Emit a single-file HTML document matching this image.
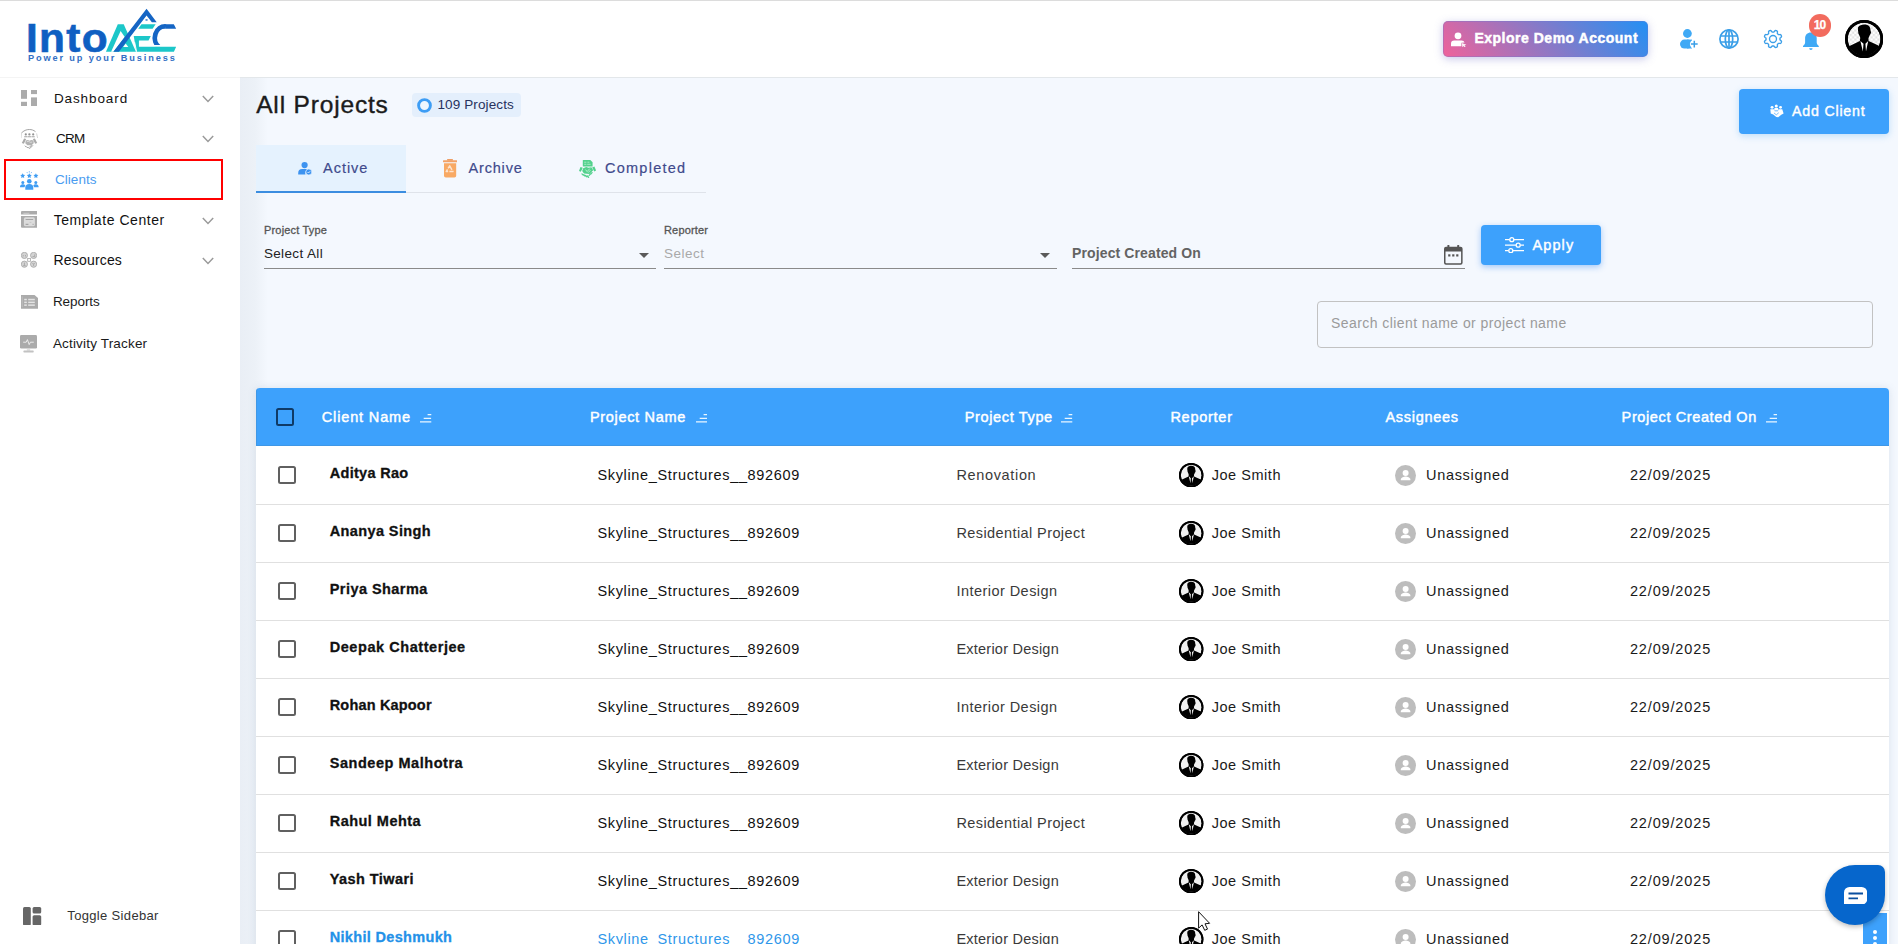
<!DOCTYPE html>
<html lang="en">
<head>
<meta charset="utf-8">
<title>All Projects</title>
<style>
*{box-sizing:border-box;margin:0;padding:0}
html,body{width:1898px;height:944px;overflow:hidden;background:#fff;font-family:"Liberation Sans",sans-serif;color:#111}
.abs{position:absolute}
.tx{position:absolute;white-space:pre;font-family:"Liberation Sans",sans-serif}
#topline{position:absolute;left:0;top:0;width:1898px;height:1px;background:#dcdcdc}
#header{position:absolute;left:0;top:0;width:1898px;height:78px;background:#fff;border-bottom:1px solid #f4f4f4}
#hline{position:absolute;left:240px;top:77px;width:1658px;height:1px;background:#e3e7ea}
#sidebar{position:absolute;left:0;top:78px;width:240px;height:866px;background:#fff}
#main{position:absolute;left:240px;top:78px;width:1658px;height:866px;background:#f4f8fe;overflow:hidden}
#main:before{content:"";position:absolute;left:0;top:0;width:28px;height:100%;background:linear-gradient(90deg,#e9eef5 0,#ecf1f7 15px,#f4f8fe 28px)}
.row{position:absolute;left:256px;width:1633px;height:58px;background:#fff;border-bottom:1px solid #dcdcdc}
.cb{position:absolute;width:17.800px;height:17.800px;border:2px solid #606060;border-radius:2.500px;background:#fff}
</style>
</head>
<body>
<svg class="abs" width="0" height="0" style="left:0;top:0"><defs><pattern id="chk" width="4.600" height="4.600" patternUnits="userSpaceOnUse"><rect width="4.600" height="4.600" fill="#fff"/><rect width="2.300" height="2.300" fill="#e4e4e4"/><rect x="2.300" y="2.300" width="2.300" height="2.300" fill="#e4e4e4"/></pattern><clipPath id="avc"><circle cx="19" cy="19" r="16.500"/></clipPath></defs></svg>
<div id="main"></div>
<span class="tx" style="left:256.2px;top:87.5px;font-size:24.5px;line-height:34px;color:#1b1b1b;letter-spacing:0.83px;-webkit-text-stroke:.4px #1b1b1b;">All Projects</span>
<div class="abs" style="left:412px;top:93px;width:109px;height:24px;border-radius:4px;background:#e4effc"></div>
<svg class="abs" style="left:417px;top:97.5px;" width="15" height="15" viewBox="0 0 15 15"><circle cx="7.500" cy="7.500" r="5.900" fill="#eef6fe" stroke="#3d9df5" stroke-width="2.900"/></svg>
<span class="tx" style="left:437.5px;top:94.7px;font-size:13.5px;line-height:20px;color:#27325e;letter-spacing:0.11px;">109 Projects</span>
<div class="abs" style="left:1739px;top:89px;width:150px;height:45px;border-radius:4px;background:#3da1fc;box-shadow:0 2px 7px rgba(80,170,240,.33)"></div>
<svg class="abs" style="left:1769px;top:104.2px;" width="14.6" height="13.8" viewBox="0 0 15.2 13.8"><g fill="#fff"><circle cx="3.200" cy="3.200" r="1.500"/><circle cx="7.600" cy="1.800" r="1.600"/><circle cx="12" cy="3.200" r="1.500"/><path d="M1.400,5.200 h3.600 l1,2 h3.200 l1,-2 h3.600 l1.400,4.300 -2.400,1.300 -3.200,2.600 -2,-.2 -3.200,-2.600 -2.600,-1.100 Z"/><path d="M5.800,3.800 h3.600 l.6,2.600 h-4.800 Z"/></g><path d="M5.200,9 l2.400,2 2.600,-2.200" stroke="#3d9ff8" stroke-width=".7" fill="none"/></svg>
<span class="tx" style="left:1792.0px;top:101.0px;font-size:14.2px;line-height:20px;color:#fff;letter-spacing:0.80px;-webkit-text-stroke:.4px #fff;">Add Client</span>
<div class="abs" style="left:256px;top:145px;width:150px;height:48px;background:#e5f2fe;border-bottom:2.500px solid #3b8de0"></div>
<div class="abs" style="left:406px;top:191.500px;width:300px;height:1.500px;background:#dfe3ea"></div>
<svg class="abs" style="left:298.1px;top:162.2px;" width="14" height="13.3" viewBox="0 0 14 13.3"><circle cx="6.600" cy="3.100" r="3.100" fill="#3d93f0"/><path d="M0.200,12.600 v-1.500 a4,4 0 0 1 4,-4 h3.600 a4,4 0 0 1 2,.5 a3.800,3.800 0 0 0 -2.300,5 Z" fill="#3d93f0"/><circle cx="10.800" cy="10" r="3" fill="#3d93f0" stroke="#e5f2fe" stroke-width=".7"/><path d="M9.500,10 l1,1 1.700,-1.800" stroke="#e5f2fe" stroke-width=".9" fill="none"/></svg>
<span class="tx" style="left:323.1px;top:157.9px;font-size:14.5px;line-height:20px;color:#3f4a8c;letter-spacing:0.96px;-webkit-text-stroke:.18px #3f4a8c;">Active</span>
<svg class="abs" style="left:443.1px;top:158.9px;" width="14.2" height="19" viewBox="0 0 14.2 19"><g fill="#f5a364"><rect x="4" y="0" width="6" height="1.800" rx=".7" fill="#ee9f66"/><rect x="0" y="1.300" width="14.200" height="1.900" rx=".5" fill="#f2a166"/><path d="M1,4.200 h12.200 v12.600 a1.800,1.800 0 0 1 -1.800,1.800 h-8.600 a1.800,1.800 0 0 1 -1.800,-1.800 Z" fill="#f8a964"/></g><path d="M6.700,6.900 l3.300,5.700 h-6.800 Z" fill="none" stroke="#fde4cf" stroke-width="1.500" stroke-linejoin="round" stroke-dasharray="4.500 1.200"/></svg>
<span class="tx" style="left:468.5px;top:157.9px;font-size:14.5px;line-height:20px;color:#3f4a8c;letter-spacing:0.82px;-webkit-text-stroke:.18px #3f4a8c;">Archive</span>
<svg class="abs" style="left:578.5px;top:160px;" width="17.3" height="18" viewBox="0 0 17.3 18"><g fill="#52d18c"><path d="M4.300,0 h7 l2.300,2.300 v3.700 a.5,.5 0 0 1 -.5,.5 h-8.800 a.5,.5 0 0 1 -.5,-.5 v-5.500 a.5,.5 0 0 1 .5,-.5 Z"/><path d="M1.500,6.900 l2.300,.8 -2,4.100 -1.800,-.9 Z M15.400,6.500 l-2.300,.9 2.200,4.100 1.800,-1 Z"/><path d="M4.200,8.300 l3,-1.200 2.300,.6 2.900,-.5 1.800,3 -3.700,3.700 -5.500,-.3 -1.800,-2.600 Z"/></g><path d="M3,13.900 l1.200,1.200 M4.800,14.800 l1.200,1.200 M6.600,15.500 l1.200,1.200 M8.400,16 l1.200,1.200 M11.800,13.600 l-1.600,1.800 M13,12.600 l-1,1.200" stroke="#52d18c" stroke-width="1.300" stroke-linecap="round"/><path d="M5.200,2.200 h2.200 M8.400,2.200 h2 M5.200,4.300 h2.200 M8.200,4.300 h3.400" stroke="#a5e9c4" stroke-width="1"/><path d="M6.600,9.600 l1.500,2 2.700,-3 M9.200,12.600 l2.200,-2.400" stroke="#c9f2dc" stroke-width=".8" fill="none"/></svg>
<span class="tx" style="left:604.9px;top:157.9px;font-size:14.5px;line-height:20px;color:#3f4a8c;letter-spacing:1.27px;-webkit-text-stroke:.18px #3f4a8c;">Completed</span>
<span class="tx" style="left:264.0px;top:219.7px;font-size:11px;line-height:20px;color:#555;letter-spacing:0.17px;-webkit-text-stroke:.3px #555;">Project Type</span>
<span class="tx" style="left:263.9px;top:243.8px;font-size:13.5px;line-height:20px;color:#222;letter-spacing:0.36px;">Select All</span>
<div class="abs" style="left:264px;top:267.500px;width:392px;height:1.300px;background:#8a8a8a"></div>
<div class="abs" style="left:639px;top:253px;width:0;height:0;border-left:5px solid transparent;border-right:5px solid transparent;border-top:5px solid #5a5a5a"></div>
<span class="tx" style="left:664.0px;top:219.7px;font-size:11px;line-height:20px;color:#555;letter-spacing:0.17px;-webkit-text-stroke:.3px #555;">Reporter</span>
<span class="tx" style="left:663.9px;top:243.8px;font-size:13.5px;line-height:20px;color:#a9a9a9;letter-spacing:0.50px;">Select</span>
<div class="abs" style="left:664px;top:267.500px;width:393px;height:1.300px;background:#8a8a8a"></div>
<div class="abs" style="left:1040px;top:253px;width:0;height:0;border-left:5px solid transparent;border-right:5px solid transparent;border-top:5px solid #5a5a5a"></div>
<span class="tx" style="left:1072.1px;top:242.5px;font-size:14px;line-height:20px;font-weight:bold;color:#636363;letter-spacing:0.11px;">Project Created On</span>
<div class="abs" style="left:1072px;top:267.500px;width:393px;height:1.300px;background:#8a8a8a"></div>
<svg class="abs" style="left:1444.2px;top:244.8px;" width="18.6" height="19.8" viewBox="0 0 18.6 19.8"><g fill="#555"><rect x="3.400" y="0" width="2" height="3.600" rx=".6"/><rect x="13.200" y="0" width="2" height="3.600" rx=".6"/><path d="M2,1.800 h14.600 a2,2 0 0 1 2,2 v14 a2,2 0 0 1 -2,2 h-14.600 a2,2 0 0 1 -2,-2 v-14 a2,2 0 0 1 2,-2 Z M1.500,6.600 v11 a.7,.7 0 0 0 .7,.7 h14.200 a.7,.7 0 0 0 .7,-.7 v-11 Z" fill-rule="evenodd"/><rect x="4.200" y="9.300" width="2.200" height="2.200"/><rect x="8.200" y="9.300" width="2.200" height="2.200"/><rect x="12.200" y="9.300" width="2.200" height="2.200"/></g></svg>
<div class="abs" style="left:1481px;top:225px;width:120px;height:40px;border-radius:4px;background:#3da1fc;box-shadow:0 2px 6px rgba(61,140,240,.45)"></div>
<svg class="abs" style="left:1504.7px;top:236.8px;" width="19" height="16.4" viewBox="0 0 19 16.4"><g stroke="#fff" stroke-width="1.300" fill="none"><path d="M0,2.700 h4.600 M9,2.700 h10 M0,8.200 h11 M15.400,8.200 h3.600 M0,13.700 h3.600 M8,13.700 h11"/><circle cx="6.800" cy="2.700" r="2"/><circle cx="13.200" cy="8.200" r="2"/><circle cx="5.800" cy="13.700" r="2"/></g></svg>
<span class="tx" style="left:1532.4px;top:234.9px;font-size:14.5px;line-height:20px;color:#fff;letter-spacing:1.13px;-webkit-text-stroke:.4px #fff;">Apply</span>
<div class="abs" style="left:1317px;top:301px;width:556px;height:47px;border:1px solid #c2c2c2;border-radius:4px"></div>
<span class="tx" style="left:1331.0px;top:313.1px;font-size:14px;line-height:20px;color:#9b9b9b;letter-spacing:0.43px;">Search client name or project name</span>
<div class="abs" style="left:256px;top:388px;width:1633px;height:570px;background:#fff;border-radius:4px 4px 0 0;box-shadow:0 0 9px rgba(90,110,150,.16)"></div>
<div class="abs" style="left:256px;top:388px;width:1633px;height:58px;background:#3da1fc;border-radius:4px 4px 0 0;box-shadow:inset 1px -1px 0 #3f97e6"></div>
<div class="abs" style="left:276px;top:408px;width:18px;height:18px;border:2px solid #0f3a66;border-radius:2.500px"></div>
<span class="tx" style="left:321.8px;top:406.9px;font-size:14.5px;line-height:20px;color:#fff;letter-spacing:0.85px;-webkit-text-stroke:.45px #fff;">Client Name</span>
<svg class="abs" style="left:420.4px;top:413.8px;" width="11.4" height="9" viewBox="0 0 11.4 9"><path d="M7.600,0.700 h3.700 M3.700,4.300 h7.400 M0,7.900 h11.300" stroke="#e9f6ff" stroke-width="1.250" fill="none"/></svg>
<span class="tx" style="left:589.9px;top:406.9px;font-size:14.5px;line-height:20px;color:#fff;letter-spacing:0.68px;-webkit-text-stroke:.45px #fff;">Project Name</span>
<svg class="abs" style="left:695.8px;top:413.8px;" width="11.4" height="9" viewBox="0 0 11.4 9"><path d="M7.600,0.700 h3.700 M3.700,4.300 h7.400 M0,7.900 h11.300" stroke="#e9f6ff" stroke-width="1.250" fill="none"/></svg>
<span class="tx" style="left:964.7px;top:406.9px;font-size:14.5px;line-height:20px;color:#fff;letter-spacing:0.65px;-webkit-text-stroke:.45px #fff;">Project Type</span>
<svg class="abs" style="left:1061.3px;top:413.8px;" width="11.4" height="9" viewBox="0 0 11.4 9"><path d="M7.600,0.700 h3.700 M3.700,4.300 h7.400 M0,7.900 h11.300" stroke="#e9f6ff" stroke-width="1.250" fill="none"/></svg>
<span class="tx" style="left:1170.4px;top:406.9px;font-size:14.5px;line-height:20px;color:#fff;letter-spacing:0.74px;-webkit-text-stroke:.45px #fff;">Reporter</span>
<span class="tx" style="left:1385.4px;top:406.9px;font-size:14.5px;line-height:20px;color:#fff;letter-spacing:0.72px;-webkit-text-stroke:.45px #fff;">Assignees</span>
<span class="tx" style="left:1621.6px;top:406.9px;font-size:14.5px;line-height:20px;color:#fff;letter-spacing:0.62px;-webkit-text-stroke:.45px #fff;">Project Created On</span>
<svg class="abs" style="left:1765.8px;top:413.8px;" width="11.4" height="9" viewBox="0 0 11.4 9"><path d="M7.600,0.700 h3.700 M3.700,4.300 h7.400 M0,7.900 h11.300" stroke="#e9f6ff" stroke-width="1.250" fill="none"/></svg>
<div class="abs" style="left:256px;top:504px;width:1633px;height:1px;background:#e0e0e0"></div>
<div class="cb" style="left:278.200px;top:466.1px"></div>
<span class="tx" style="left:329.7px;top:462.9px;font-size:14.5px;line-height:20px;font-weight:bold;color:#111;letter-spacing:0.31px;-webkit-text-stroke:.3px #111;">Aditya Rao</span>
<span class="tx" style="left:597.4px;top:464.9px;font-size:14.5px;line-height:20px;color:#111;letter-spacing:0.66px;">Skyline_Structures__892609</span>
<span class="tx" style="left:956.4px;top:464.9px;font-size:14.5px;line-height:20px;color:#3a3a3a;letter-spacing:0.66px;">Renovation</span>
<svg class="abs" style="left:1179.2px;top:463.1px;" width="24.4" height="24.4" viewBox="0 0 38 38"><circle cx="19" cy="19" r="19" fill="#000"/><circle cx="19" cy="19" r="16.300" fill="#f1f1f1"/><g clip-path="url(#avc)"><path d="M1,38 V29 C3,26.500 4.500,25.900 5.600,25.400 L14.800,20.900 L15.300,17 H23.200 L23.500,20.900 L32.200,25 C33.500,25.600 35.500,26.600 37,29 V38 Z" fill="#000"/><path d="M13,7.300 C14.300,5 17,4.300 19.500,4.400 C23,4.400 25.500,6.500 25.300,10 L25.900,12.300 C25.700,13.900 25.200,14.500 24.700,15 C24,17.600 22.500,19.800 19.300,19.900 C16.500,19.800 14.800,17.600 14.100,15 C13.400,14.200 13.100,13 13.200,12 C12.800,10.500 12.700,8.800 13,7.300 Z" fill="#000"/><path d="M15.300,20.800 L18.400,23.700 L17.800,31.400 Z M23.100,20.800 L20.300,23.700 L20.900,31.400 Z" fill="#fff"/></g><circle cx="19" cy="19" r="17.600" fill="none" stroke="#000" stroke-width="2.800"/></svg>
<span class="tx" style="left:1211.7px;top:464.9px;font-size:14.5px;line-height:20px;color:#1a1a1a;letter-spacing:0.54px;">Joe Smith</span>
<svg class="abs" style="left:1395px;top:465px;" width="21" height="21" viewBox="0 0 21 21"><circle cx="10.500" cy="10.500" r="10.500" fill="#bdbdbd"/><circle cx="10.600" cy="8" r="3" fill="#fff"/><path d="M5.800,15.200 v-.8 c0,-1.900 3.200,-2.900 4.800,-2.900 s4.800,1 4.800,2.900 v.8 Z" fill="#fff"/></svg>
<span class="tx" style="left:1426.0px;top:464.9px;font-size:14.5px;line-height:20px;color:#1a1a1a;letter-spacing:0.68px;">Unassigned</span>
<span class="tx" style="left:1629.9px;top:464.9px;font-size:14.5px;line-height:20px;color:#1a1a1a;letter-spacing:0.86px;">22/09/2025</span>
<div class="abs" style="left:256px;top:562px;width:1633px;height:1px;background:#e0e0e0"></div>
<div class="cb" style="left:278.200px;top:524.1px"></div>
<span class="tx" style="left:329.7px;top:520.9px;font-size:14.5px;line-height:20px;font-weight:bold;color:#111;letter-spacing:0.39px;-webkit-text-stroke:.3px #111;">Ananya Singh</span>
<span class="tx" style="left:597.4px;top:522.9px;font-size:14.5px;line-height:20px;color:#111;letter-spacing:0.66px;">Skyline_Structures__892609</span>
<span class="tx" style="left:956.4px;top:522.9px;font-size:14.5px;line-height:20px;color:#3a3a3a;letter-spacing:0.41px;">Residential Project</span>
<svg class="abs" style="left:1179.2px;top:521.1px;" width="24.4" height="24.4" viewBox="0 0 38 38"><circle cx="19" cy="19" r="19" fill="#000"/><circle cx="19" cy="19" r="16.300" fill="#f1f1f1"/><g clip-path="url(#avc)"><path d="M1,38 V29 C3,26.500 4.500,25.900 5.600,25.400 L14.800,20.900 L15.300,17 H23.200 L23.500,20.900 L32.200,25 C33.500,25.600 35.500,26.600 37,29 V38 Z" fill="#000"/><path d="M13,7.300 C14.300,5 17,4.300 19.500,4.400 C23,4.400 25.500,6.500 25.300,10 L25.900,12.300 C25.700,13.900 25.200,14.500 24.700,15 C24,17.600 22.500,19.800 19.300,19.900 C16.500,19.800 14.800,17.600 14.100,15 C13.400,14.200 13.100,13 13.200,12 C12.800,10.500 12.700,8.800 13,7.300 Z" fill="#000"/><path d="M15.300,20.800 L18.400,23.700 L17.800,31.400 Z M23.100,20.800 L20.300,23.700 L20.900,31.400 Z" fill="#fff"/></g><circle cx="19" cy="19" r="17.600" fill="none" stroke="#000" stroke-width="2.800"/></svg>
<span class="tx" style="left:1211.7px;top:522.9px;font-size:14.5px;line-height:20px;color:#1a1a1a;letter-spacing:0.54px;">Joe Smith</span>
<svg class="abs" style="left:1395px;top:523px;" width="21" height="21" viewBox="0 0 21 21"><circle cx="10.500" cy="10.500" r="10.500" fill="#bdbdbd"/><circle cx="10.600" cy="8" r="3" fill="#fff"/><path d="M5.800,15.200 v-.8 c0,-1.900 3.200,-2.900 4.800,-2.900 s4.800,1 4.800,2.900 v.8 Z" fill="#fff"/></svg>
<span class="tx" style="left:1426.0px;top:522.9px;font-size:14.5px;line-height:20px;color:#1a1a1a;letter-spacing:0.68px;">Unassigned</span>
<span class="tx" style="left:1629.9px;top:522.9px;font-size:14.5px;line-height:20px;color:#1a1a1a;letter-spacing:0.86px;">22/09/2025</span>
<div class="abs" style="left:256px;top:620px;width:1633px;height:1px;background:#e0e0e0"></div>
<div class="cb" style="left:278.200px;top:582.1px"></div>
<span class="tx" style="left:329.7px;top:578.9px;font-size:14.5px;line-height:20px;font-weight:bold;color:#111;letter-spacing:0.45px;-webkit-text-stroke:.3px #111;">Priya Sharma</span>
<span class="tx" style="left:597.4px;top:580.9px;font-size:14.5px;line-height:20px;color:#111;letter-spacing:0.66px;">Skyline_Structures__892609</span>
<span class="tx" style="left:956.4px;top:580.9px;font-size:14.5px;line-height:20px;color:#3a3a3a;letter-spacing:0.46px;">Interior Design</span>
<svg class="abs" style="left:1179.2px;top:579.1px;" width="24.4" height="24.4" viewBox="0 0 38 38"><circle cx="19" cy="19" r="19" fill="#000"/><circle cx="19" cy="19" r="16.300" fill="#f1f1f1"/><g clip-path="url(#avc)"><path d="M1,38 V29 C3,26.500 4.500,25.900 5.600,25.400 L14.800,20.900 L15.300,17 H23.200 L23.500,20.900 L32.200,25 C33.500,25.600 35.500,26.600 37,29 V38 Z" fill="#000"/><path d="M13,7.300 C14.300,5 17,4.300 19.500,4.400 C23,4.400 25.500,6.500 25.300,10 L25.900,12.300 C25.700,13.900 25.200,14.500 24.700,15 C24,17.600 22.500,19.800 19.300,19.900 C16.500,19.800 14.800,17.600 14.100,15 C13.400,14.200 13.100,13 13.200,12 C12.800,10.500 12.700,8.800 13,7.300 Z" fill="#000"/><path d="M15.300,20.800 L18.400,23.700 L17.800,31.400 Z M23.100,20.800 L20.300,23.700 L20.900,31.400 Z" fill="#fff"/></g><circle cx="19" cy="19" r="17.600" fill="none" stroke="#000" stroke-width="2.800"/></svg>
<span class="tx" style="left:1211.7px;top:580.9px;font-size:14.5px;line-height:20px;color:#1a1a1a;letter-spacing:0.54px;">Joe Smith</span>
<svg class="abs" style="left:1395px;top:581px;" width="21" height="21" viewBox="0 0 21 21"><circle cx="10.500" cy="10.500" r="10.500" fill="#bdbdbd"/><circle cx="10.600" cy="8" r="3" fill="#fff"/><path d="M5.800,15.200 v-.8 c0,-1.900 3.200,-2.900 4.800,-2.900 s4.800,1 4.800,2.900 v.8 Z" fill="#fff"/></svg>
<span class="tx" style="left:1426.0px;top:580.9px;font-size:14.5px;line-height:20px;color:#1a1a1a;letter-spacing:0.68px;">Unassigned</span>
<span class="tx" style="left:1629.9px;top:580.9px;font-size:14.5px;line-height:20px;color:#1a1a1a;letter-spacing:0.86px;">22/09/2025</span>
<div class="abs" style="left:256px;top:678px;width:1633px;height:1px;background:#e0e0e0"></div>
<div class="cb" style="left:278.200px;top:640.1px"></div>
<span class="tx" style="left:329.7px;top:636.9px;font-size:14.5px;line-height:20px;font-weight:bold;color:#111;letter-spacing:0.56px;-webkit-text-stroke:.3px #111;">Deepak Chatterjee</span>
<span class="tx" style="left:597.4px;top:638.9px;font-size:14.5px;line-height:20px;color:#111;letter-spacing:0.66px;">Skyline_Structures__892609</span>
<span class="tx" style="left:956.4px;top:638.9px;font-size:14.5px;line-height:20px;color:#3a3a3a;letter-spacing:0.23px;">Exterior Design</span>
<svg class="abs" style="left:1179.2px;top:637.1px;" width="24.4" height="24.4" viewBox="0 0 38 38"><circle cx="19" cy="19" r="19" fill="#000"/><circle cx="19" cy="19" r="16.300" fill="#f1f1f1"/><g clip-path="url(#avc)"><path d="M1,38 V29 C3,26.500 4.500,25.900 5.600,25.400 L14.800,20.900 L15.300,17 H23.200 L23.500,20.900 L32.200,25 C33.500,25.600 35.500,26.600 37,29 V38 Z" fill="#000"/><path d="M13,7.300 C14.300,5 17,4.300 19.500,4.400 C23,4.400 25.500,6.500 25.300,10 L25.900,12.300 C25.700,13.900 25.200,14.500 24.700,15 C24,17.600 22.500,19.800 19.300,19.900 C16.500,19.800 14.800,17.600 14.100,15 C13.400,14.200 13.100,13 13.200,12 C12.800,10.500 12.700,8.800 13,7.300 Z" fill="#000"/><path d="M15.300,20.800 L18.400,23.700 L17.800,31.400 Z M23.100,20.800 L20.300,23.700 L20.900,31.400 Z" fill="#fff"/></g><circle cx="19" cy="19" r="17.600" fill="none" stroke="#000" stroke-width="2.800"/></svg>
<span class="tx" style="left:1211.7px;top:638.9px;font-size:14.5px;line-height:20px;color:#1a1a1a;letter-spacing:0.54px;">Joe Smith</span>
<svg class="abs" style="left:1395px;top:639px;" width="21" height="21" viewBox="0 0 21 21"><circle cx="10.500" cy="10.500" r="10.500" fill="#bdbdbd"/><circle cx="10.600" cy="8" r="3" fill="#fff"/><path d="M5.800,15.200 v-.8 c0,-1.900 3.200,-2.900 4.800,-2.900 s4.800,1 4.800,2.900 v.8 Z" fill="#fff"/></svg>
<span class="tx" style="left:1426.0px;top:638.9px;font-size:14.5px;line-height:20px;color:#1a1a1a;letter-spacing:0.68px;">Unassigned</span>
<span class="tx" style="left:1629.9px;top:638.9px;font-size:14.5px;line-height:20px;color:#1a1a1a;letter-spacing:0.86px;">22/09/2025</span>
<div class="abs" style="left:256px;top:736px;width:1633px;height:1px;background:#e0e0e0"></div>
<div class="cb" style="left:278.200px;top:698.1px"></div>
<span class="tx" style="left:329.7px;top:694.9px;font-size:14.5px;line-height:20px;font-weight:bold;color:#111;letter-spacing:0.18px;-webkit-text-stroke:.3px #111;">Rohan Kapoor</span>
<span class="tx" style="left:597.4px;top:696.9px;font-size:14.5px;line-height:20px;color:#111;letter-spacing:0.66px;">Skyline_Structures__892609</span>
<span class="tx" style="left:956.4px;top:696.9px;font-size:14.5px;line-height:20px;color:#3a3a3a;letter-spacing:0.46px;">Interior Design</span>
<svg class="abs" style="left:1179.2px;top:695.1px;" width="24.4" height="24.4" viewBox="0 0 38 38"><circle cx="19" cy="19" r="19" fill="#000"/><circle cx="19" cy="19" r="16.300" fill="#f1f1f1"/><g clip-path="url(#avc)"><path d="M1,38 V29 C3,26.500 4.500,25.900 5.600,25.400 L14.800,20.900 L15.300,17 H23.200 L23.500,20.900 L32.200,25 C33.500,25.600 35.500,26.600 37,29 V38 Z" fill="#000"/><path d="M13,7.300 C14.300,5 17,4.300 19.500,4.400 C23,4.400 25.500,6.500 25.300,10 L25.900,12.300 C25.700,13.900 25.200,14.500 24.700,15 C24,17.600 22.500,19.800 19.300,19.900 C16.500,19.800 14.800,17.600 14.100,15 C13.400,14.200 13.100,13 13.200,12 C12.800,10.500 12.700,8.800 13,7.300 Z" fill="#000"/><path d="M15.300,20.800 L18.400,23.700 L17.800,31.400 Z M23.100,20.800 L20.300,23.700 L20.900,31.400 Z" fill="#fff"/></g><circle cx="19" cy="19" r="17.600" fill="none" stroke="#000" stroke-width="2.800"/></svg>
<span class="tx" style="left:1211.7px;top:696.9px;font-size:14.5px;line-height:20px;color:#1a1a1a;letter-spacing:0.54px;">Joe Smith</span>
<svg class="abs" style="left:1395px;top:697px;" width="21" height="21" viewBox="0 0 21 21"><circle cx="10.500" cy="10.500" r="10.500" fill="#bdbdbd"/><circle cx="10.600" cy="8" r="3" fill="#fff"/><path d="M5.800,15.200 v-.8 c0,-1.900 3.200,-2.900 4.800,-2.900 s4.800,1 4.800,2.900 v.8 Z" fill="#fff"/></svg>
<span class="tx" style="left:1426.0px;top:696.9px;font-size:14.5px;line-height:20px;color:#1a1a1a;letter-spacing:0.68px;">Unassigned</span>
<span class="tx" style="left:1629.9px;top:696.9px;font-size:14.5px;line-height:20px;color:#1a1a1a;letter-spacing:0.86px;">22/09/2025</span>
<div class="abs" style="left:256px;top:794px;width:1633px;height:1px;background:#e0e0e0"></div>
<div class="cb" style="left:278.200px;top:756.1px"></div>
<span class="tx" style="left:329.7px;top:752.9px;font-size:14.5px;line-height:20px;font-weight:bold;color:#111;letter-spacing:0.54px;-webkit-text-stroke:.3px #111;">Sandeep Malhotra</span>
<span class="tx" style="left:597.4px;top:754.9px;font-size:14.5px;line-height:20px;color:#111;letter-spacing:0.66px;">Skyline_Structures__892609</span>
<span class="tx" style="left:956.4px;top:754.9px;font-size:14.5px;line-height:20px;color:#3a3a3a;letter-spacing:0.23px;">Exterior Design</span>
<svg class="abs" style="left:1179.2px;top:753.1px;" width="24.4" height="24.4" viewBox="0 0 38 38"><circle cx="19" cy="19" r="19" fill="#000"/><circle cx="19" cy="19" r="16.300" fill="#f1f1f1"/><g clip-path="url(#avc)"><path d="M1,38 V29 C3,26.500 4.500,25.900 5.600,25.400 L14.800,20.900 L15.300,17 H23.200 L23.500,20.900 L32.200,25 C33.500,25.600 35.500,26.600 37,29 V38 Z" fill="#000"/><path d="M13,7.300 C14.300,5 17,4.300 19.500,4.400 C23,4.400 25.500,6.500 25.300,10 L25.900,12.300 C25.700,13.900 25.200,14.500 24.700,15 C24,17.600 22.500,19.800 19.300,19.900 C16.500,19.800 14.800,17.600 14.100,15 C13.400,14.200 13.100,13 13.200,12 C12.800,10.500 12.700,8.800 13,7.300 Z" fill="#000"/><path d="M15.300,20.800 L18.400,23.700 L17.800,31.400 Z M23.100,20.800 L20.300,23.700 L20.900,31.400 Z" fill="#fff"/></g><circle cx="19" cy="19" r="17.600" fill="none" stroke="#000" stroke-width="2.800"/></svg>
<span class="tx" style="left:1211.7px;top:754.9px;font-size:14.5px;line-height:20px;color:#1a1a1a;letter-spacing:0.54px;">Joe Smith</span>
<svg class="abs" style="left:1395px;top:755px;" width="21" height="21" viewBox="0 0 21 21"><circle cx="10.500" cy="10.500" r="10.500" fill="#bdbdbd"/><circle cx="10.600" cy="8" r="3" fill="#fff"/><path d="M5.800,15.200 v-.8 c0,-1.900 3.200,-2.900 4.800,-2.900 s4.800,1 4.800,2.900 v.8 Z" fill="#fff"/></svg>
<span class="tx" style="left:1426.0px;top:754.9px;font-size:14.5px;line-height:20px;color:#1a1a1a;letter-spacing:0.68px;">Unassigned</span>
<span class="tx" style="left:1629.9px;top:754.9px;font-size:14.5px;line-height:20px;color:#1a1a1a;letter-spacing:0.86px;">22/09/2025</span>
<div class="abs" style="left:256px;top:852px;width:1633px;height:1px;background:#e0e0e0"></div>
<div class="cb" style="left:278.200px;top:814.1px"></div>
<span class="tx" style="left:329.7px;top:810.9px;font-size:14.5px;line-height:20px;font-weight:bold;color:#111;letter-spacing:0.48px;-webkit-text-stroke:.3px #111;">Rahul Mehta</span>
<span class="tx" style="left:597.4px;top:812.9px;font-size:14.5px;line-height:20px;color:#111;letter-spacing:0.66px;">Skyline_Structures__892609</span>
<span class="tx" style="left:956.4px;top:812.9px;font-size:14.5px;line-height:20px;color:#3a3a3a;letter-spacing:0.41px;">Residential Project</span>
<svg class="abs" style="left:1179.2px;top:811.1px;" width="24.4" height="24.4" viewBox="0 0 38 38"><circle cx="19" cy="19" r="19" fill="#000"/><circle cx="19" cy="19" r="16.300" fill="#f1f1f1"/><g clip-path="url(#avc)"><path d="M1,38 V29 C3,26.500 4.500,25.900 5.600,25.400 L14.800,20.900 L15.300,17 H23.200 L23.500,20.900 L32.200,25 C33.500,25.600 35.500,26.600 37,29 V38 Z" fill="#000"/><path d="M13,7.300 C14.300,5 17,4.300 19.500,4.400 C23,4.400 25.500,6.500 25.300,10 L25.900,12.300 C25.700,13.900 25.200,14.500 24.700,15 C24,17.600 22.500,19.800 19.300,19.900 C16.500,19.800 14.800,17.600 14.100,15 C13.400,14.200 13.100,13 13.200,12 C12.800,10.500 12.700,8.800 13,7.300 Z" fill="#000"/><path d="M15.300,20.800 L18.400,23.700 L17.800,31.400 Z M23.100,20.800 L20.300,23.700 L20.900,31.400 Z" fill="#fff"/></g><circle cx="19" cy="19" r="17.600" fill="none" stroke="#000" stroke-width="2.800"/></svg>
<span class="tx" style="left:1211.7px;top:812.9px;font-size:14.5px;line-height:20px;color:#1a1a1a;letter-spacing:0.54px;">Joe Smith</span>
<svg class="abs" style="left:1395px;top:813px;" width="21" height="21" viewBox="0 0 21 21"><circle cx="10.500" cy="10.500" r="10.500" fill="#bdbdbd"/><circle cx="10.600" cy="8" r="3" fill="#fff"/><path d="M5.800,15.200 v-.8 c0,-1.900 3.200,-2.900 4.800,-2.900 s4.800,1 4.800,2.900 v.8 Z" fill="#fff"/></svg>
<span class="tx" style="left:1426.0px;top:812.9px;font-size:14.5px;line-height:20px;color:#1a1a1a;letter-spacing:0.68px;">Unassigned</span>
<span class="tx" style="left:1629.9px;top:812.9px;font-size:14.5px;line-height:20px;color:#1a1a1a;letter-spacing:0.86px;">22/09/2025</span>
<div class="abs" style="left:256px;top:910px;width:1633px;height:1px;background:#e0e0e0"></div>
<div class="cb" style="left:278.200px;top:872.1px"></div>
<span class="tx" style="left:329.7px;top:868.9px;font-size:14.5px;line-height:20px;font-weight:bold;color:#111;letter-spacing:0.44px;-webkit-text-stroke:.3px #111;">Yash Tiwari</span>
<span class="tx" style="left:597.4px;top:870.9px;font-size:14.5px;line-height:20px;color:#111;letter-spacing:0.66px;">Skyline_Structures__892609</span>
<span class="tx" style="left:956.4px;top:870.9px;font-size:14.5px;line-height:20px;color:#3a3a3a;letter-spacing:0.23px;">Exterior Design</span>
<svg class="abs" style="left:1179.2px;top:869.1px;" width="24.4" height="24.4" viewBox="0 0 38 38"><circle cx="19" cy="19" r="19" fill="#000"/><circle cx="19" cy="19" r="16.300" fill="#f1f1f1"/><g clip-path="url(#avc)"><path d="M1,38 V29 C3,26.500 4.500,25.900 5.600,25.400 L14.800,20.900 L15.300,17 H23.200 L23.500,20.900 L32.200,25 C33.500,25.600 35.500,26.600 37,29 V38 Z" fill="#000"/><path d="M13,7.300 C14.300,5 17,4.300 19.500,4.400 C23,4.400 25.500,6.500 25.300,10 L25.900,12.300 C25.700,13.900 25.200,14.500 24.700,15 C24,17.600 22.500,19.800 19.300,19.900 C16.500,19.800 14.800,17.600 14.100,15 C13.400,14.200 13.100,13 13.200,12 C12.800,10.500 12.700,8.800 13,7.300 Z" fill="#000"/><path d="M15.300,20.800 L18.400,23.700 L17.800,31.400 Z M23.100,20.800 L20.300,23.700 L20.900,31.400 Z" fill="#fff"/></g><circle cx="19" cy="19" r="17.600" fill="none" stroke="#000" stroke-width="2.800"/></svg>
<span class="tx" style="left:1211.7px;top:870.9px;font-size:14.5px;line-height:20px;color:#1a1a1a;letter-spacing:0.54px;">Joe Smith</span>
<svg class="abs" style="left:1395px;top:871px;" width="21" height="21" viewBox="0 0 21 21"><circle cx="10.500" cy="10.500" r="10.500" fill="#bdbdbd"/><circle cx="10.600" cy="8" r="3" fill="#fff"/><path d="M5.800,15.200 v-.8 c0,-1.900 3.200,-2.900 4.800,-2.900 s4.800,1 4.800,2.900 v.8 Z" fill="#fff"/></svg>
<span class="tx" style="left:1426.0px;top:870.9px;font-size:14.5px;line-height:20px;color:#1a1a1a;letter-spacing:0.68px;">Unassigned</span>
<span class="tx" style="left:1629.9px;top:870.9px;font-size:14.5px;line-height:20px;color:#1a1a1a;letter-spacing:0.86px;">22/09/2025</span>
<div class="abs" style="left:256px;top:968px;width:1633px;height:1px;background:#e0e0e0"></div>
<div class="cb" style="left:278.200px;top:930.1px"></div>
<span class="tx" style="left:329.7px;top:926.9px;font-size:14.5px;line-height:20px;font-weight:bold;color:#2391e8;letter-spacing:0.33px;-webkit-text-stroke:.3px #2391e8;">Nikhil Deshmukh</span>
<span class="tx" style="left:597.4px;top:928.9px;font-size:14.5px;line-height:20px;color:#2f97ea;letter-spacing:0.66px;">Skyline_Structures__892609</span>
<span class="tx" style="left:956.4px;top:928.9px;font-size:14.5px;line-height:20px;color:#3a3a3a;letter-spacing:0.23px;">Exterior Design</span>
<svg class="abs" style="left:1179.2px;top:927.1px;" width="24.4" height="24.4" viewBox="0 0 38 38"><circle cx="19" cy="19" r="19" fill="#000"/><circle cx="19" cy="19" r="16.300" fill="#f1f1f1"/><g clip-path="url(#avc)"><path d="M1,38 V29 C3,26.500 4.500,25.900 5.600,25.400 L14.800,20.900 L15.300,17 H23.200 L23.500,20.900 L32.200,25 C33.500,25.600 35.500,26.600 37,29 V38 Z" fill="#000"/><path d="M13,7.300 C14.300,5 17,4.300 19.500,4.400 C23,4.400 25.500,6.500 25.300,10 L25.900,12.300 C25.700,13.900 25.200,14.500 24.700,15 C24,17.600 22.500,19.800 19.300,19.900 C16.500,19.800 14.800,17.600 14.100,15 C13.400,14.200 13.100,13 13.200,12 C12.800,10.500 12.700,8.800 13,7.300 Z" fill="#000"/><path d="M15.300,20.800 L18.400,23.700 L17.800,31.400 Z M23.100,20.800 L20.300,23.700 L20.900,31.400 Z" fill="#fff"/></g><circle cx="19" cy="19" r="17.600" fill="none" stroke="#000" stroke-width="2.800"/></svg>
<span class="tx" style="left:1211.7px;top:928.9px;font-size:14.5px;line-height:20px;color:#1a1a1a;letter-spacing:0.54px;">Joe Smith</span>
<svg class="abs" style="left:1395px;top:929px;" width="21" height="21" viewBox="0 0 21 21"><circle cx="10.500" cy="10.500" r="10.500" fill="#bdbdbd"/><circle cx="10.600" cy="8" r="3" fill="#fff"/><path d="M5.800,15.200 v-.8 c0,-1.900 3.200,-2.900 4.800,-2.900 s4.800,1 4.800,2.900 v.8 Z" fill="#fff"/></svg>
<span class="tx" style="left:1426.0px;top:928.9px;font-size:14.5px;line-height:20px;color:#1a1a1a;letter-spacing:0.68px;">Unassigned</span>
<span class="tx" style="left:1629.9px;top:928.9px;font-size:14.5px;line-height:20px;color:#1a1a1a;letter-spacing:0.86px;">22/09/2025</span>
<div class="abs" style="left:1863.300px;top:913px;width:23.400px;height:31px;background:#3da1fc"></div>
<div class="abs" style="left:1872.900px;top:929.800px;width:4px;height:4px;border-radius:50%;background:#fff"></div>
<div class="abs" style="left:1872.900px;top:935.800px;width:4px;height:4px;border-radius:50%;background:#fff"></div>
<div class="abs" style="left:1872.900px;top:941.700px;width:4px;height:4px;border-radius:50%;background:#fff"></div>
<div class="abs" style="left:1825px;top:865px;width:60px;height:60px;border-radius:30px 7px 30px 30px;background:#0666cc;box-shadow:0 2px 5px rgba(0,0,0,.26)"></div>
<svg class="abs" style="left:1843.8px;top:886.6px;" width="23.2" height="17.7" viewBox="0 0 23.2 17.7"><path d="M5.500,0 h12.200 a5.500,5.500 0 0 1 5.500,5.500 v6.700 a5.500,5.500 0 0 1 -5.500,5.500 h-17.700 v-12.200 a5.500,5.500 0 0 1 5.500,-5.500 Z" fill="#fff"/><path d="M4.500,6.500 h14.500 M4.500,11.400 h9.500" stroke="#0b4f9f" stroke-width="1.800"/></svg>
<svg class="abs" style="left:1198px;top:911.2px;" width="13" height="21" viewBox="0 0 13 21"><path d="M0.600,0.700 L0.600,17.200 L4.100,13.900 L6.700,19.300 L9.500,18.100 L7,12.800 L11.600,12.300 Z" fill="#fff" stroke="#111" stroke-width="1" stroke-linejoin="miter"/></svg>
<div id="sidebar"></div>
<svg class="abs" style="left:21px;top:90px;" width="16" height="16" viewBox="0 0 16 16"><g fill="#ababab"><rect x="0" y="0" width="6" height="8.8"/><rect x="10" y="0" width="6" height="4.1"/><rect x="0" y="11.8" width="6" height="4.2"/><rect x="10" y="7.400" width="6" height="8.6"/></g></svg>
<span class="tx" style="left:53.9px;top:88.7px;font-size:13.5px;line-height:20px;color:#111;letter-spacing:0.90px;">Dashboard</span>
<svg class="abs" style="left:202px;top:95.3px;" width="12" height="8" viewBox="0 0 12 8"><path d="M0.8,1 L6,6.4 L11.2,1" fill="none" stroke="#9a9a9a" stroke-width="1.5"/></svg>
<svg class="abs" style="left:21px;top:128.8px;" width="17" height="20" viewBox="0 0 17 20"><g fill="none" stroke="#a3a3a3" stroke-width="0.800" stroke-linecap="round"><path d="M0.500,4 C2.500,1.600 5.500,0.500 8.300,0.500 C10.600,0.500 12.600,1.200 14.200,2.400" stroke-width="1"/><path d="M0.300,5.400 L0,8.800 M15.700,4.800 L16.500,8.600" stroke="#c9c9c9"/><path d="M3.600,7.700 h2.400 M7.200,7.700 h2.400 M10.900,7.700 h2.400" stroke-width="1.100"/><path d="M4.200,17 l1,1 M5.800,17.900 l1,1 M7.600,18.500 l.9,.9 M11.700,16.600 l-2.600,2.600 M10.400,16.300 l-1.800,1.800" stroke="#a0a0a0" stroke-width="1"/></g><g fill="#939393"><circle cx="4.800" cy="5.400" r="1.100"/><circle cx="8.400" cy="5.400" r="1.150"/><circle cx="12.200" cy="5.400" r="1.100"/><path d="M3.100,9.500 L5.100,10.100 L2.900,14.800 L0.800,14 Z M13.900,9.500 L11.900,10.100 L14.100,14.800 L16.200,14 Z" fill="#a9a9a9"/><path d="M4.700,11.600 L7,10.900 L8.500,11.700 L10.200,10.900 L12.600,11.600 L12.700,14.200 L10.600,16.200 L6.400,16.200 L4.300,14.200 Z" fill="#b2b2b2"/></g><path d="M5.800,12.800 q1.400,-1 2.600,0 q1.200,1 2.800,.2" stroke="#e4e4e4" stroke-width=".8" fill="none"/></svg>
<span class="tx" style="left:55.9px;top:128.5px;font-size:13.5px;line-height:20px;color:#111;letter-spacing:-0.67px;">CRM</span>
<svg class="abs" style="left:202px;top:135px;" width="12" height="8" viewBox="0 0 12 8"><path d="M0.8,1 L6,6.4 L11.2,1" fill="none" stroke="#9a9a9a" stroke-width="1.5"/></svg>
<div class="abs" style="left:4px;top:159px;width:219px;height:41px;border:2px solid #f00"></div>
<svg class="abs" style="left:20px;top:170.7px;" width="18.6" height="19" viewBox="0 0 18.6 19"><polygon points="2.70,2.30 3.46,3.85 5.17,4.10 3.94,5.30 4.23,7.00 2.70,6.20 1.17,7.00 1.46,5.30 0.23,4.10 1.94,3.85" fill="#3f9df3"/><polygon points="9.30,2.30 10.06,3.85 11.77,4.10 10.54,5.30 10.83,7.00 9.30,6.20 7.77,7.00 8.06,5.30 6.83,4.10 8.54,3.85" fill="#3f9df3"/><polygon points="15.90,2.30 16.66,3.85 18.37,4.10 17.14,5.30 17.43,7.00 15.90,6.20 14.37,7.00 14.66,5.30 13.43,4.10 15.14,3.85" fill="#3f9df3"/><path d="M9.300,0 v1.600 M6.800,1 l.8,1.200 M11.800,1 l-.8,1.200" stroke="#3f9df3" stroke-width=".6"/><circle cx="9.300" cy="10.200" r="2.300" fill="#3f9df3"/><path d="M5.300,18.700 v-2 a4,3.600 0 0 1 8,0 v2 Z" fill="#3f9df3"/><circle cx="2.800" cy="11.500" r="1.500" fill="#3f9df3"/><path d="M0,16.200 v-.8 a2.800,2.300 0 0 1 5.300,-.9 l-.9,1.700 Z" fill="#3f9df3"/><circle cx="15.800" cy="11.500" r="1.500" fill="#3f9df3"/><path d="M18.600,16.200 v-.8 a2.800,2.300 0 0 0 -5.300,-.9 l.9,1.700 Z" fill="#3f9df3"/></svg>
<span class="tx" style="left:54.9px;top:169.8px;font-size:13.5px;line-height:20px;color:#4a9cf0;letter-spacing:0.07px;">Clients</span>
<svg class="abs" style="left:20.6px;top:211px;" width="16.8" height="16.8" viewBox="0 0 16.8 16.8"><g fill="#ababab"><path d="M1,0 h14.800 a1,1 0 0 1 1,1 v2.500 h-16.800 v-2.500 a1,1 0 0 1 1,-1 Z"/><path d="M0,5 h16.800 v10.800 a1,1 0 0 1 -1,1 h-14.800 a1,1 0 0 1 -1,-1 Z"/></g><rect x="2.900" y="6.300" width="11" height="9" rx="1.600" fill="#dcdcdc"/><path d="M4.600,8.500 h7.600 M4.600,13.400 h2.800 M11.600,13.400 h1" stroke="#a6a6a6" stroke-width="1.200"/><path d="M8.600,11.400 h1.800" stroke="#c2c2c2" stroke-width=".8"/><path d="M2.400,2.300 h6" stroke="#d0d0d0" stroke-width=".9"/></svg>
<span class="tx" style="left:53.7px;top:210.3px;font-size:14px;line-height:20px;color:#111;letter-spacing:0.56px;">Template Center</span>
<svg class="abs" style="left:202px;top:216.8px;" width="12" height="8" viewBox="0 0 12 8"><path d="M0.8,1 L6,6.4 L11.2,1" fill="none" stroke="#9a9a9a" stroke-width="1.5"/></svg>
<svg class="abs" style="left:21px;top:252.2px;" width="16" height="15.6" viewBox="0 0 16 15.6"><circle cx="3.4" cy="3.4" r="3.100" fill="#d4d4d4" stroke="#a6a6a6" stroke-width=".8"/><circle cx="12.6" cy="3.4" r="3.100" fill="#d4d4d4" stroke="#a6a6a6" stroke-width=".8"/><circle cx="3.4" cy="12.2" r="3.100" fill="#d4d4d4" stroke="#a6a6a6" stroke-width=".8"/><circle cx="12.6" cy="12.2" r="3.100" fill="#d4d4d4" stroke="#a6a6a6" stroke-width=".8"/><rect x="6.700" y="6.500" width="2.800" height="2.800" fill="#fff" stroke="#a6a6a6" stroke-width=".8"/><path d="M2.200,3 v1.400 M4.500,3 v1.400 M11.500,4.600 h2.200 v-2.200 M3.400,10.600 v2.600 M2.200,13.600 h2.400 M11.400,11 l1.200,1.200 1.200,-1.200 M12.600,12.200 v1.800" stroke="#9a9a9a" stroke-width=".7" fill="none"/></svg>
<span class="tx" style="left:53.6px;top:250.4px;font-size:14px;line-height:20px;color:#111;letter-spacing:0.17px;">Resources</span>
<svg class="abs" style="left:202px;top:257px;" width="12" height="8" viewBox="0 0 12 8"><path d="M0.8,1 L6,6.4 L11.2,1" fill="none" stroke="#9a9a9a" stroke-width="1.5"/></svg>
<svg class="abs" style="left:21px;top:295.1px;" width="17" height="13.7" viewBox="0 0 17 13.7"><path d="M0,0 h13.500 l3.500,3 v10.700 h-17 Z" fill="#ababab"/><path d="M1.200,1.500 v10.800" stroke="#c6c6c6" stroke-width=".7"/><g fill="#e4e4e4"><rect x="3.200" y="3.800" width="2.600" height="1.500"/><rect x="7.200" y="3.800" width="6.600" height="1.500"/><rect x="3.200" y="6.600" width="2.600" height="1.500"/><rect x="7.200" y="6.600" width="6.600" height="1.500"/><rect x="3.200" y="9.400" width="2.600" height="1.500"/><rect x="7.200" y="9.400" width="6.600" height="1.500"/></g></svg>
<span class="tx" style="left:52.9px;top:291.6px;font-size:13.5px;line-height:20px;color:#1a1a1a;letter-spacing:-0.06px;">Reports</span>
<svg class="abs" style="left:20.2px;top:335.1px;" width="17" height="17.6" viewBox="0 0 17 17.6"><rect x="0" y="0" width="17" height="13.500" rx="1.300" fill="#ababab"/><path d="M3.200,7.200 h3 l1.200,-2.600 1.800,5 1.200,-2.400 h3.400" fill="none" stroke="#f2f2f2" stroke-width=".9"/><rect x="6.800" y="14.500" width="3.400" height="1" fill="#c8c8c8"/><rect x="3.400" y="15.600" width="10.300" height="1.800" rx=".6" fill="#c2c2c2"/></svg>
<span class="tx" style="left:52.9px;top:333.5px;font-size:13.5px;line-height:20px;color:#1a1a1a;letter-spacing:0.18px;">Activity Tracker</span>
<svg class="abs" style="left:22.8px;top:906.8px;" width="19" height="18.5" viewBox="0 0 19 18.5"><g fill="#666"><rect x="0" y="0" width="7.800" height="18.500" rx="1.500"/><rect x="9.600" y="0" width="8.600" height="6.500" rx="1.500"/><rect x="9.600" y="8.300" width="8.600" height="10.200" rx="1.500"/></g></svg>
<span class="tx" style="left:67.3px;top:905.8px;font-size:13px;line-height:20px;color:#333;letter-spacing:0.34px;">Toggle Sidebar</span>
<div id="header"></div><div id="hline"></div><div id="topline"></div>
<span class="tx" style="left:26.1px;top:9.8px;font-size:40px;line-height:56px;font-weight:bold;color:#0f5fc2;letter-spacing:1.26px;transform:scaleX(1.06);transform-origin:0 0;-webkit-text-stroke:.6px #0f5fc2;">Into</span>
<svg class="abs" style="left:100px;top:0px;" width="90" height="70" viewBox="0 0 1214 944"><polygon points="80,697 240,328 320,328 485,697" fill="#1cc7c9"/><polygon points="150,697 278,418 334,500 182,697" fill="#fff"/><polygon points="312,635 346,588 382,635" fill="#fff"/><polygon points="180,697 628,118 765,300 700,300 628,210 255,697" fill="#1565c4"/><rect x="614" y="258" width="28" height="22" fill="#4a86d0"/><path d="M890,357.500 A138,155 0 0 0 800,640" fill="none" stroke="#1565c4" stroke-width="64"/><polygon points="885,326 996,326 1027,389 885,389" fill="#1565c4"/><rect x="690" y="607" width="240" height="26" fill="#fff"/><polygon points="560,328 750,328 710,388 515,388" fill="#1cc7c9"/><polygon points="455,485 685,485 655,545 525,545 525,632 1027,632 997,697 490,697" fill="#1cc7c9"/><polygon points="472,560 500,697 488,697 462,575" fill="#fff"/></svg>
<span class="tx" style="left:27.9px;top:48.2px;font-size:9.2px;line-height:20px;font-weight:bold;color:#336fc4;letter-spacing:1.89px;">Power up your Business</span>
<div class="abs" style="left:1443px;top:21px;width:205px;height:36px;border-radius:5px;background:linear-gradient(48deg,#f0629a 0%,#2290f4 100%);box-shadow:0 2px 9px rgba(110,110,200,.38),inset 0 0 0 1px rgba(110,120,210,.35)"></div>
<svg class="abs" style="left:1450.5px;top:31.5px;" width="16.5" height="15" viewBox="0 0 16.5 15"><circle cx="7" cy="3.800" r="3.400" fill="#fff"/><path d="M0,14.300 V11.800 a3.200,3.200 0 0 1 3.200,-3.200 h7.400 a3.200,3.200 0 0 1 3,2 l-3.200,.2 v3.500 Z" fill="#fff"/><path d="M10.800,11 l4.600,1.800 -1.800,.7 1.300,1.800 -.9,.6 -1.300,-1.800 -1.300,1.200 Z" fill="#fff" opacity=".9"/></svg>
<span class="tx" style="left:1474.4px;top:28.2px;font-size:14px;line-height:20px;font-weight:bold;color:#fff;letter-spacing:0.51px;-webkit-text-stroke:.45px #fff;">Explore Demo Account</span>
<svg class="abs" style="left:1680px;top:29.1px;" width="18" height="20" viewBox="0 0 18 20"><circle cx="7.400" cy="4.500" r="4.400" fill="#3fa9f5"/><rect x="0" y="10.600" width="12" height="8.900" rx="4.400" fill="#3fa9f5"/><rect x="7" y="10.600" width="5" height="8.900" fill="#3fa9f5"/><circle cx="14.300" cy="15.100" r="4.400" fill="#fff"/><path d="M10.900,15.100 h6.800 M14.300,11.700 v6.800" stroke="#3a9fe8" stroke-width="1.500" fill="none"/></svg>
<svg class="abs" style="left:1719px;top:29px;" width="20" height="20" viewBox="0 0 20 20"><g fill="none" stroke="#3b9fe8" stroke-width="1.700"><circle cx="10" cy="10" r="9.1"/><ellipse cx="10" cy="10" rx="3.700" ry="9.100"/><path d="M10,1 v18 M1.400,7 h17.200 M1.400,13 h17.200"/></g></svg>
<svg class="abs" style="left:1763.2px;top:29.4px;" width="20" height="20" viewBox="0 0 20 20"><path d="M16.95,10.00 L16.95,10.27 L16.96,10.55 L17.02,10.83 L17.25,11.15 L17.80,11.55 L18.32,12.00 L18.50,12.40 L18.48,12.76 L18.39,13.10 L18.27,13.43 L18.12,13.74 L17.95,14.05 L17.71,14.32 L17.30,14.47 L16.61,14.42 L15.94,14.32 L15.55,14.38 L15.31,14.53 L15.11,14.72 L14.91,14.91 L14.72,15.11 L14.53,15.31 L14.38,15.55 L14.32,15.94 L14.42,16.61 L14.47,17.30 L14.32,17.71 L14.05,17.95 L13.74,18.12 L13.43,18.27 L13.10,18.39 L12.76,18.48 L12.40,18.50 L12.00,18.32 L11.55,17.80 L11.15,17.25 L10.83,17.02 L10.55,16.96 L10.27,16.95 L10.00,16.95 L9.73,16.95 L9.45,16.96 L9.17,17.02 L8.85,17.25 L8.45,17.80 L8.00,18.32 L7.60,18.50 L7.24,18.48 L6.90,18.39 L6.57,18.27 L6.26,18.12 L5.95,17.95 L5.68,17.71 L5.53,17.30 L5.58,16.61 L5.68,15.94 L5.62,15.55 L5.47,15.31 L5.28,15.11 L5.09,14.91 L4.89,14.72 L4.69,14.53 L4.45,14.38 L4.06,14.32 L3.39,14.42 L2.70,14.47 L2.29,14.32 L2.05,14.05 L1.88,13.74 L1.73,13.43 L1.61,13.10 L1.52,12.76 L1.50,12.40 L1.68,12.00 L2.20,11.55 L2.75,11.15 L2.98,10.83 L3.04,10.55 L3.05,10.27 L3.05,10.00 L3.05,9.73 L3.04,9.45 L2.98,9.17 L2.75,8.85 L2.20,8.45 L1.68,8.00 L1.50,7.60 L1.52,7.24 L1.61,6.90 L1.73,6.57 L1.88,6.26 L2.05,5.95 L2.29,5.68 L2.70,5.53 L3.39,5.58 L4.06,5.68 L4.45,5.62 L4.69,5.47 L4.89,5.28 L5.09,5.09 L5.28,4.89 L5.47,4.69 L5.62,4.45 L5.68,4.06 L5.58,3.39 L5.53,2.70 L5.68,2.29 L5.95,2.05 L6.26,1.88 L6.57,1.73 L6.90,1.61 L7.24,1.52 L7.60,1.50 L8.00,1.68 L8.45,2.20 L8.85,2.75 L9.17,2.98 L9.45,3.04 L9.73,3.05 L10.00,3.05 L10.27,3.05 L10.55,3.04 L10.83,2.98 L11.15,2.75 L11.55,2.20 L12.00,1.68 L12.40,1.50 L12.76,1.52 L13.10,1.61 L13.43,1.73 L13.74,1.88 L14.05,2.05 L14.32,2.29 L14.47,2.70 L14.42,3.39 L14.32,4.06 L14.38,4.45 L14.53,4.69 L14.72,4.89 L14.91,5.09 L15.11,5.28 L15.31,5.47 L15.55,5.62 L15.94,5.68 L16.61,5.58 L17.30,5.53 L17.71,5.68 L17.95,5.95 L18.12,6.26 L18.27,6.57 L18.39,6.90 L18.48,7.24 L18.50,7.60 L18.32,8.00 L17.80,8.45 L17.25,8.85 L17.02,9.17 L16.96,9.45 L16.95,9.73Z" fill="none" stroke="#3c9fe8" stroke-width="1.350" stroke-linejoin="round"/><circle cx="10" cy="10" r="3.500" fill="none" stroke="#3c9fe8" stroke-width="1.350"/></svg>
<svg class="abs" style="left:1803px;top:31.5px;" width="16" height="18.5" viewBox="0 0 16 18.5"><path d="M7.900,0.400 C4.400,0.400 2.100,2.800 2.100,6 V10.500 C2.100,12 1,13 0,14 V14.900 H15.800 V14 C14.800,13 13.700,12 13.700,10.500 V6 C13.700,2.800 11.400,0.400 7.900,0.400 Z" fill="#3fa9f5"/><path d="M6.200,16.200 a1.700,1.800 0 0 0 3.400,0 Z" fill="#3fa9f5"/></svg>
<div class="abs" style="left:1808.700px;top:14.400px;width:22.800px;height:22.800px;border-radius:50%;background:#f26b5e"></div>
<span class="tx" style="left:1813.7px;top:15.4px;font-size:12px;line-height:20px;font-weight:bold;color:#fff;letter-spacing:-0.78px;-webkit-text-stroke:.25px #fff;">10</span>
<svg class="abs" style="left:1845px;top:19.5px;" width="38.2" height="38.2" viewBox="0 0 38 38"><circle cx="19" cy="19" r="19" fill="#000"/><circle cx="19" cy="19" r="16.300" fill="url(#chk)"/><g clip-path="url(#avc)"><path d="M1,38 V29 C3,26.500 4.500,25.900 5.600,25.400 L14.800,20.900 L15.300,17 H23.200 L23.500,20.900 L32.200,25 C33.500,25.600 35.500,26.600 37,29 V38 Z" fill="#000"/><path d="M13,7.300 C14.300,5 17,4.300 19.500,4.400 C23,4.400 25.500,6.500 25.300,10 L25.900,12.300 C25.700,13.900 25.200,14.500 24.700,15 C24,17.600 22.500,19.800 19.300,19.900 C16.500,19.800 14.800,17.600 14.100,15 C13.400,14.200 13.100,13 13.200,12 C12.800,10.500 12.700,8.800 13,7.300 Z" fill="#000"/><path d="M15.300,20.800 L18.400,23.700 L17.800,31.400 Z M23.100,20.800 L20.300,23.700 L20.900,31.400 Z" fill="#fff"/></g><circle cx="19" cy="19" r="17.600" fill="none" stroke="#000" stroke-width="2.800"/></svg>
</body>
</html>
